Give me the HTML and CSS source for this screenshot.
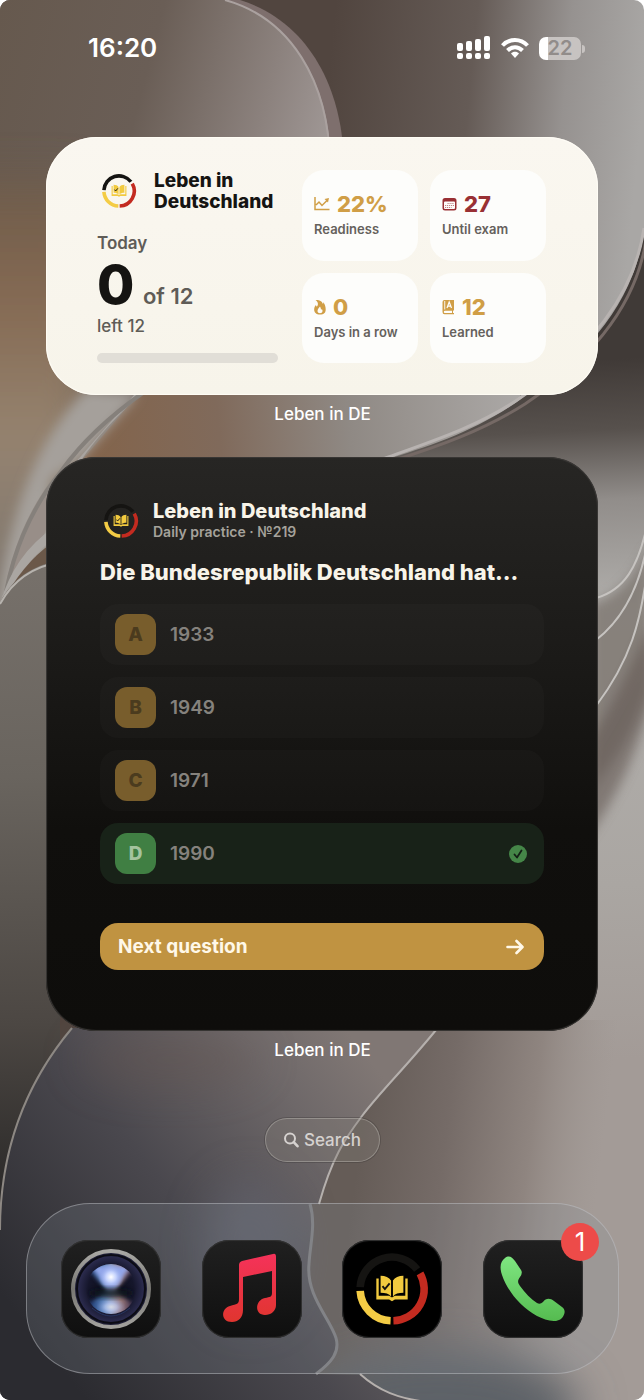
FILE: index.html
```html
<!DOCTYPE html>
<html lang="en">
<head>
  <meta charset="utf-8">
  <meta name="viewport" content="width=device-width, initial-scale=1">
  <title>Leben in DE</title>
  <link rel="stylesheet" href="styles.css">
</head>
<body>
  <!-- shared shapes -->
  <svg class="defs" aria-hidden="true">
    <symbol id="logo" viewBox="0 0 80 80">
      <g fill="none" stroke-width="8">
        <path class="logo-top" d="M6.5 38A33.500 33.500 0 0 1 66.500 19.500"/>
        <path stroke="#c32b20" d="M69.500 23.500A33.500 33.500 0 0 1 41.500 73.500"/>
        <path stroke="#f4cc45" d="M38.500 73.500A33.500 33.500 0 0 1 6.500 42"/>
      </g>
      <g fill="#f2ca3f" class="logo-book">
        <path d="M26 29h-2.500v22H37l3 2 3-2h13.500V29H54v18H43l-3 2-3-2H26z"/>
        <path d="M28 26c5 0 9 2 11 5v17c-2-3-6-4-11-4zM52 26c-5 0-9 2-11 5v17c2-3 6-4 11-4z"/>
      </g>
      <path d="M30 37l2.500 3 5-6" fill="none" stroke="#15130f" stroke-width="2"/>
    </symbol>
  </svg>

  <main class="screen">
    <svg class="wallpaper" viewBox="0 0 644 1400" preserveAspectRatio="none" aria-hidden="true">
      <defs>
        <linearGradient id="base" x1="330" x2="644" y1="60" y2="90" gradientUnits="userSpaceOnUse">
          <stop offset="0" stop-color="#51453f"/>
          <stop offset=".45" stop-color="#655b56"/>
          <stop offset=".75" stop-color="#969290"/>
          <stop offset="1" stop-color="#a9a7a5"/>
        </linearGradient>
        <linearGradient id="lens" x1="0" x2="344" y1="0" y2="90" gradientUnits="userSpaceOnUse">
          <stop offset="0" stop-color="#66594e"/>
          <stop offset=".45" stop-color="#6a5e56"/>
          <stop offset=".8" stop-color="#8c827e"/>
          <stop offset="1" stop-color="#a09896"/>
        </linearGradient>
        <linearGradient id="leftside" x1="0" x2="0" y1="130" y2="620" gradientUnits="userSpaceOnUse">
          <stop offset="0" stop-color="#655648"/>
          <stop offset=".35" stop-color="#856a53"/>
          <stop offset=".62" stop-color="#95836f"/>
          <stop offset="1" stop-color="#7c7671"/>
        </linearGradient>
        <linearGradient id="middle" x1="90" x2="520" y1="440" y2="400" gradientUnits="userSpaceOnUse">
          <stop offset="0" stop-color="#83644b"/>
          <stop offset=".3" stop-color="#806a5b"/>
          <stop offset=".6" stop-color="#8f8984"/>
          <stop offset="1" stop-color="#aba8a6"/>
        </linearGradient>
        <linearGradient id="right" x1="590" x2="625" y1="360" y2="1060" gradientUnits="userSpaceOnUse">
          <stop offset="0" stop-color="#403a37"/>
          <stop offset=".1" stop-color="#57514d"/>
          <stop offset=".2" stop-color="#918d8a"/>
          <stop offset=".36" stop-color="#b2b0ad"/>
          <stop offset=".75" stop-color="#aaa6a2"/>
          <stop offset="1" stop-color="#a39b97"/>
        </linearGradient>
        <linearGradient id="slab" x1="0" x2="10" y1="560" y2="1180" gradientUnits="userSpaceOnUse">
          <stop offset="0" stop-color="#77716b"/>
          <stop offset=".35" stop-color="#69645e"/>
          <stop offset=".75" stop-color="#4c4743"/>
          <stop offset="1" stop-color="#2e2c2b"/>
        </linearGradient>
        <linearGradient id="bowl" x1="30" x2="370" y1="1330" y2="1060" gradientUnits="userSpaceOnUse">
          <stop offset="0" stop-color="#2b2b30"/>
          <stop offset=".45" stop-color="#4a484e"/>
          <stop offset=".8" stop-color="#6e6869"/>
          <stop offset="1" stop-color="#807774"/>
        </linearGradient>
        <linearGradient id="floor" x1="360" x2="600" y1="1140" y2="1170" gradientUnits="userSpaceOnUse">
          <stop offset="0" stop-color="#655c57"/>
          <stop offset=".35" stop-color="#756b67"/>
          <stop offset=".7" stop-color="#8f8580"/>
          <stop offset="1" stop-color="#9d9590" stop-opacity="0"/>
        </linearGradient>
        <filter id="soft" x="-80%" y="-80%" width="260%" height="260%"><feGaussianBlur stdDeviation="22"/></filter>
        <filter id="glow" x="-80%" y="-80%" width="260%" height="260%"><feGaussianBlur stdDeviation="6"/></filter>
      </defs>

      <rect width="644" height="1400" fill="url(#base)"/>
      <path d="M0 0H240C310 22 343 90 344 165V460H0z" fill="#7e6f6d"/>
      <path d="M0 0H225C290 18 330 80 331 165V460H0z" fill="url(#lens)"/>
      <path d="M225 0C290 18 329 80 330 165" fill="none" stroke="#aaa19f" stroke-width="2"/>
      <path d="M-80 180H90V700H-80z" fill="url(#leftside)" filter="url(#soft)"/>

      <path d="M150 380H520V560H50V500L84 458z" fill="url(#middle)"/>
      <path d="M644 232C634 300 590 355 525 396C480 430 430 446 385 460V1400H644z" fill="url(#right)"/>
      <path d="M644 228C634 296 590 350 520 398C480 426 430 442 380 460" fill="none" stroke="#b8b3b1" stroke-width="3"/>
      <path d="M646 240C636 306 592 359 525 404C484 430 440 446 392 461" fill="none" stroke="#756965" stroke-width="3"/>

      <!-- ribbons on the left -->
      <path d="M86 390C36 440 4 520 -6 640L50 580V480L84 456L138 394z" fill="#a5a09b" filter="url(#glow)"/>
      <path d="M144 392C118 414 96 438 80 462L62 478L140 388z" fill="#a9a5a1"/>
      <path d="M50 520V482C30 510 8 550 0 620V640z" fill="#988e88"/>
      <path d="M144 392C110 416 82 442 62 470C28 512 8 560 2 620" fill="none" stroke="#85807b" stroke-width="4"/>
      <path d="M60 528C32 548 12 570 0 620" fill="none" stroke="#aaa6a2" stroke-width="9"/>
      <path d="M60 538C38 550 20 572 8 592L60 566z" fill="#6b5849"/>

      <path d="M0 602C12 580 30 566 60 560V1040L90 1028V1400H0z" fill="url(#slab)"/>
      <path d="M0 604C12 582 30 567 60 562" fill="none" stroke="#b7b3ae" stroke-width="2"/>

      <!-- strands on the right -->
      <path d="M590 604C625 594 640 565 650 545V690C630 740 615 760 590 790z" fill="#7d7670" opacity=".8" filter="url(#glow)"/>
      <path d="M590 740C628 680 640 640 654 620V690C636 760 615 800 580 850z" fill="#645852" opacity=".6" filter="url(#glow)"/>
      <g fill="none" stroke="#c6c3c0" stroke-width="2">
        <path d="M596 598C625 590 638 565 646 530"/>
        <path d="M596 640C628 615 640 580 646 550"/>
        <path d="M596 706C632 658 640 620 646 580"/>
      </g>

      <path d="M300 1020H644V1400H300z" fill="url(#floor)"/>
      <ellipse cx="440" cy="1410" rx="140" ry="60" fill="#5d6267" filter="url(#soft)"/>
      <path d="M72 1028C20 1090 0 1160 0 1240V1400H420C400 1398 380 1392 362 1375L316 1374C332 1362 340 1352 336 1338C330 1318 306 1296 309 1264C310 1245 316 1224 310 1204H319C332 1158 344 1140 362 1116C380 1092 405 1068 436 1030z" fill="url(#bowl)"/>
      <ellipse cx="170" cy="1060" rx="90" ry="26" fill="#65544f" opacity=".4" filter="url(#soft)"/>
      <ellipse cx="250" cy="1250" rx="46" ry="70" fill="#646571" opacity=".6" filter="url(#soft)"/>
      <path d="M72 1028C20 1090 0 1160 0 1230" fill="none" stroke="#8d8883" stroke-width="2"/>
      <path d="M436 1030C405 1068 380 1092 362 1116C344 1140 332 1158 319 1204M360 1374C380 1392 400 1398 420 1401" fill="none" stroke="#b5b0ad" stroke-width="2"/>
      <path d="M310 1204C316 1224 310 1245 309 1264C306 1296 330 1318 336 1338C340 1352 332 1362 316 1374" fill="none" stroke="#828183" stroke-width="3"/>
    </svg>

    <header class="status">
      <time>16:20</time>
      <div class="status-icons">
        <svg width="34" height="24" viewBox="0 0 34 24" fill="#fff" aria-label="Signal">
          <rect x="0" y="7" width="6" height="8" rx="2"/><rect x="9" y="5" width="6" height="10" rx="2"/>
          <rect x="18" y="3" width="6" height="12" rx="2"/><rect x="27" y="0" width="6" height="15" rx="2"/>
          <rect x="0" y="17" width="6" height="6" rx="2"/><rect x="9" y="17" width="6" height="6" rx="2"/>
          <rect x="18" y="17" width="6" height="6" rx="2"/><rect x="27" y="17" width="6" height="6" rx="2"/>
        </svg>
        <svg width="28" height="22" viewBox="0 0 28 22" fill="none" stroke="#fff" stroke-width="4" aria-label="Wi-Fi">
          <path d="M1.500 8.500C8.500 1 19.500 1 26.500 8.500"/>
          <path d="M6.500 13.500C11 9 17 9 21.500 13.500"/>
          <path d="M14 21l-4-4.500c2-2.500 6-2.500 8 0z" fill="#fff" stroke="none"/>
        </svg>
        <span class="battery">22</span>
      </div>
    </header>

    <section class="widget stats">
      <div class="today">
        <div class="brand">
          <svg class="logo" aria-hidden="true"><use href="#logo"/></svg>
          <h2>Leben in Deutschland</h2>
        </div>
        <p class="today-label">Today</p>
        <p class="count"><strong>0</strong> of 12</p>
        <p class="left">left 12</p>
        <div class="bar"></div>
      </div>
      <div class="tiles">
        <div class="tile">
          <p class="value">
            <svg width="16" height="16" viewBox="0 0 16 16" fill="none" stroke="currentColor" stroke-width="1.500"><path d="M1 1v12.500h14.500M2 9l3-3 3 3.500 5-5"/><path d="M10.500 3l4.500-1-1 4.500z" fill="currentColor" stroke="none"/></svg>
            22%
          </p>
          <p class="caption">Readiness</p>
        </div>
        <div class="tile">
          <p class="value exam">
            <svg width="15" height="16" viewBox="0 0 15 16"><path fill="currentColor" fill-rule="evenodd" d="M3 2h9q2.500 0 2.500 2.500v7.500q0 2.500-2.500 2.500H3Q.5 14.500.5 12V4.500Q.5 2 3 2zM3 5.500q-1 0-1 1V12q0 1 1 1h9q1 0 1-1V6.500q0-1-1-1z"/><path d="M5.500 7.500H12M3 9.500h9M3 11.500h6.500" stroke="currentColor" stroke-opacity=".6" stroke-width="1.200" stroke-dasharray="1.200 .8"/></svg>
            27
          </p>
          <p class="caption">Until exam</p>
        </div>
        <div class="tile">
          <p class="value">
            <svg width="12" height="16" viewBox="0 0 12 16"><path fill="currentColor" fill-rule="evenodd" d="M1.500 1C7 1 8 3 9 5c.3-.7.3-1.200 0-2 3 3 3.500 9 1.500 11-2 2-7 2-9 0C-1 11 .5 7.500 2 6c.2 1 .5 1.500 1 1.500C5 5 3.500 2.500 1.500 1zM6 7.500c-1 1.500-2.500 2.500-2.500 4.500 0 3 5 3 5 0 0-1-.3-1.500-.8-2l-.7 1C7 9.500 6.500 8.500 6 7.500z"/></svg>
            0
          </p>
          <p class="caption">Days in a row</p>
        </div>
        <div class="tile">
          <p class="value">
            <svg width="13" height="16" viewBox="0 0 13 16"><path fill="currentColor" fill-rule="evenodd" d="M2.500 1H12v10.500h-1V14h1v1.200H2.500Q.5 15.200.5 13V3Q.5 1 2.500 1zM3 11.700q-1.200 0-1.200 1.200T3 14h7v-2.300zM2.300 2v8.500h.9V2z"/><path d="M5 9l2.200-6L9.500 9M5.700 7.200h3" fill="none" stroke="#fdfdfb" stroke-width="1.200"/></svg>
            12
          </p>
          <p class="caption">Learned</p>
        </div>
      </div>
    </section>
    <p class="widget-name">Leben in DE</p>

    <section class="widget quiz">
      <div class="brand">
        <svg class="logo" aria-hidden="true"><use href="#logo"/></svg>
        <div>
          <h2>Leben in Deutschland</h2>
          <p class="sub">Daily practice · №219</p>
        </div>
      </div>
      <h3>Die Bundesrepublik Deutschland hat...</h3>
      <div class="options">
        <button class="option"><span class="letter">A</span>1933</button>
        <button class="option"><span class="letter">B</span>1949</button>
        <button class="option"><span class="letter">C</span>1971</button>
        <button class="option correct"><span class="letter">D</span>1990
          <svg width="18" height="18" viewBox="0 0 18 18"><circle cx="9" cy="9" r="9" fill="#458648"/><path d="M5.500 9.500l2.500 3 4.500-7" fill="none" stroke="#142016" stroke-width="1.800" stroke-linecap="round" stroke-linejoin="round"/></svg>
        </button>
      </div>
      <button class="next">Next question
        <svg width="18" height="16" viewBox="0 0 18 16" fill="none" stroke="currentColor" stroke-width="2.600" stroke-linecap="round" stroke-linejoin="round"><path d="M1.500 8H16M10.500 2L16.500 8l-6 6"/></svg>
      </button>
    </section>
    <p class="widget-name">Leben in DE</p>

    <button class="search">
      <svg width="15" height="16" viewBox="0 0 15 16" fill="none" stroke="currentColor" stroke-width="2" stroke-linecap="round"><circle cx="6" cy="6.500" r="5"/><path d="M9.700 10.200L13.500 14.200" stroke-width="2.600"/></svg>
      Search
    </button>

    <nav class="dock">
      <a class="app" href="#camera" aria-label="Camera">
        <svg viewBox="0 0 100 98">
          <defs>
            <radialGradient id="glass"><stop offset="0" stop-color="#0a0c16"/><stop offset=".6" stop-color="#15162b"/><stop offset=".85" stop-color="#2a2a4c"/><stop offset="1" stop-color="#151525"/></radialGradient>
            <linearGradient id="ring" x1="0" x2="0" y1="0" y2="1"><stop offset="0" stop-color="#aaa9a5"/><stop offset=".5" stop-color="#777672"/><stop offset="1" stop-color="#a3a29e"/></linearGradient>
            <radialGradient id="shine"><stop offset="0" stop-color="#fff"/><stop offset=".4" stop-color="#c3d1fd"/><stop offset="1" stop-color="#7f95e0" stop-opacity="0"/></radialGradient>
            <linearGradient id="shine2" x1="0" x2="1" y1="0" y2="0"><stop offset="0" stop-color="#1c3f86"/><stop offset=".35" stop-color="#6fa3e0"/><stop offset=".5" stop-color="#c3d4ef"/><stop offset=".7" stop-color="#c79c94"/><stop offset="1" stop-color="#4a3658"/></linearGradient>
            <filter id="haze" x="-30%" y="-30%" width="160%" height="160%"><feGaussianBlur stdDeviation="2"/></filter>
            <clipPath id="ball"><circle cx="50" cy="49" r="25"/></clipPath>
          </defs>
          <circle cx="50" cy="49" r="38" fill="url(#glass)" stroke="url(#ring)" stroke-width="4"/>
          <circle cx="50" cy="49" r="34" fill="none" stroke="#0c0c15" stroke-width="2"/>
          <g clip-path="url(#ball)">
            <path d="M28 30Q50 14 72 30L54 50L72 64Q66 78 50 78T28 64L46 50z" fill="url(#shine2)" opacity=".8" filter="url(#haze)"/>
            <path d="M30 26H70L52 50H48z" fill="#94a8ec" filter="url(#haze)"/>
            <circle cx="50" cy="37" r="13" fill="url(#shine)"/>
            <ellipse cx="50" cy="67" rx="15" ry="9" fill="url(#shine)" opacity=".6"/>
            <ellipse cx="50" cy="53" rx="22" ry="5" fill="#10121d" opacity=".8" filter="url(#haze)"/>
          </g>
          <path d="M31 68Q50 84 69 68" fill="none" stroke="#27345f"/>
        </svg>
      </a>
      <a class="app" href="#music" aria-label="Music">
        <svg viewBox="0 0 100 98">
          <defs><linearGradient id="note" x1="0" x2="0" y1="0" y2="1"><stop offset="0" stop-color="#f5325a"/><stop offset="1" stop-color="#e0352f"/></linearGradient></defs>
          <path fill="url(#note)" d="M40 21L71 14Q74 13 74 17V65C74 71 69 75 63 75C52 75 53 60 63 58C68 57 70 57 70 53V31L41 37V70C41 78 36 82 30 82C18 82 19 68 28 66C35 64 37 64 37 59V25Q37 22 40 21z"/>
        </svg>
      </a>
      <a class="app app-leben" href="#leben" aria-label="Leben in DE">
        <svg viewBox="0 0 100 98"><use href="#logo" x="12" y="11" width="76" height="76"/></svg>
      </a>
      <a class="app" href="#phone" aria-label="Phone">
        <svg viewBox="0 0 100 98">
          <defs><linearGradient id="call" x1="0" x2="0" y1="0" y2="1"><stop offset="0" stop-color="#7fe681"/><stop offset="1" stop-color="#55bb50"/></linearGradient></defs>
          <path fill="url(#call)" d="M22 18C26 15 29 17 32 21L38 30Q40 33 37 37C34 41 35 43 37 46C42 53 48 59 54 63Q57 65 60 62C63 58 67 58 71 61L79 67C83 70 82 74 79 78C73 84 62 80 54 76C37 67 24 50 19 35C16 26 18 21 22 18z"/>
        </svg>
        <span class="badge">1</span>
      </a>
    </nav>
  </main>
</body>
</html>
```
FILE: styles.css
```css
* {
  box-sizing: border-box;
}

body {
  margin: 0;
  background-color: #fff;
  font-family: Inter, "Liberation Sans", sans-serif;
}

h2, h3, p {
  margin: 0;
}

button {
  font-family: inherit;
  border: none;
  cursor: pointer;
}

.defs {
  position: absolute;
  width: 0;
  height: 0;
}

.screen {
  position: relative;
  z-index: 0;
  display: flex;
  flex-direction: column;
  min-height: 100vh;
  padding: 0 25px 26px 26px;
  border-radius: 10px;
  overflow: hidden;
}

.wallpaper {
  position: absolute;
  inset: 0;
  z-index: -1;
  width: 100%;
  height: 100%;
}

/* status bar */
.status {
  display: flex;
  justify-content: space-between;
  align-items: center;
  padding: 32px 38px 73px 62px;
  color: #fff;
}

.status time {
  font-size: 26px;
  line-height: 32px;
  font-weight: 600;
}

.status-icons {
  display: flex;
  align-items: center;
  gap: 10px;
}

.battery {
  position: relative;
  width: 42px;
  height: 23px;
  border-radius: 7px;
  background: linear-gradient(90deg, #fff 22%, #c7c3c1 22%);
  color: #918c8a;
  font-size: 20px;
  line-height: 23px;
  font-weight: 600;
  text-align: center;
}

.battery::after {
  content: "";
  position: absolute;
  right: -4px;
  top: 8px;
  width: 3px;
  height: 8px;
  border-radius: 0 3px 3px 0;
  background-color: #c7c3c1;
}

/* widgets */
.widget {
  margin: 0 21px 0 20px;
  border-radius: 50px;
}

.brand {
  display: flex;
  align-items: center;
}

.logo {
  width: 36px;
  height: 36px;
  flex: none;
}

.logo-top {
  stroke: #151412;
}

.stats {
  display: flex;
  gap: 24px;
  padding: 33px 52px 32px 51px;
  background: linear-gradient(#faf7f0, #f7f4ea);
  box-shadow: inset 0 0 1px 1px #fffdf6;
  color: #151412;
}

.today {
  flex: 181;
}

.stats .brand {
  gap: 17px;
  padding-left: 4px;
}

.stats .logo-book {
  stroke: #2a2515;
}

.stats h2 {
  font-size: 19px;
  line-height: 21px;
  font-weight: 800;
}

.today-label {
  margin-top: 20px;
  color: #5f5c57;
  font-size: 17px;
  line-height: 22px;
  font-weight: 600;
}

.count {
  color: #5f5c57;
  font-size: 22px;
  line-height: 26px;
  font-weight: 600;
}

.count strong {
  margin-right: 3px;
  color: #151412;
  font-size: 54px;
  line-height: 61px;
  font-weight: 800;
}

.left {
  color: #5f5c57;
  font-size: 17px;
  line-height: 22px;
  font-weight: 500;
}

.bar {
  height: 10px;
  margin-top: 16px;
  border-radius: 5px;
  background-color: #e1ded7;
}

.tiles {
  flex: 244;
  display: grid;
  grid-template-columns: 1fr 1fr;
  gap: 12px;
}

.tile {
  display: flex;
  flex-direction: column;
  justify-content: center;
  padding: 0 12px;
  border-radius: 22px;
  background-color: #fdfdfb;
}

.value {
  display: flex;
  align-items: center;
  gap: 7px;
  color: #d09e46;
  font-size: 22px;
  line-height: 28px;
  font-weight: 800;
}

.exam {
  color: #993034;
}

.caption {
  color: #65615c;
  font-size: 13px;
  line-height: 22px;
  font-weight: 600;
  white-space: nowrap;
}

.widget-name {
  color: #fff;
  font-size: 17px;
  line-height: 22px;
  font-weight: 500;
  text-align: center;
  padding: 8px 0 32px;
}

/* daily question */
.quiz {
  padding: 43px 54px 61px;
  background: linear-gradient(#272624, #1b1a18 35%, #100f0d 65%, #0e0d0b);
  box-shadow: inset 0 0 1px 1px #3b3937;
  color: #f8f4e9;
}

.quiz .brand {
  gap: 14px;
  padding-left: 3px;
}

.quiz h2 {
  font-size: 20px;
  line-height: 23px;
  font-weight: 800;
}

.sub {
  color: #a5a29b;
  font-size: 14px;
  line-height: 18px;
  font-weight: 600;
}

.quiz h3 {
  margin: 17px 0;
  font-size: 22px;
  line-height: 29px;
  font-weight: 800;
  white-space: nowrap;
}

.options {
  display: flex;
  flex-direction: column;
  gap: 12px;
}

.option {
  display: flex;
  align-items: center;
  gap: 14px;
  padding: 10px 17px 10px 15px;
  border-radius: 18px;
  background-color: rgba(255, 255, 255, 0.02);
  color: #85827d;
  font-size: 19px;
  line-height: 22px;
  font-weight: 600;
}

.letter {
  width: 41px;
  border-radius: 12px;
  background-color: #785d2c;
  color: #4b3b1e;
  line-height: 41px;
  font-weight: 800;
}

.correct {
  background-color: #182218;
}

.correct .letter {
  background-color: #407f43;
  color: #a5c39e;
}

.correct svg {
  margin-left: auto;
}

.next {
  display: flex;
  justify-content: space-between;
  align-items: center;
  width: 100%;
  margin-top: 39px;
  padding: 12px 20px 12px 18px;
  border-radius: 18px;
  background-color: #c09341;
  color: #fff8e8;
  font-size: 19px;
  line-height: 23px;
  font-weight: 700;
}

/* search and dock */
.search {
  display: flex;
  align-items: center;
  gap: 5px;
  align-self: center;
  margin: 25px 0 41px;
  padding: 10px 18px;
  border: 1px solid rgba(210, 205, 200, 0.35);
  border-radius: 22px;
  background-color: rgba(130, 122, 118, 0.35);
  box-shadow: 0 0 0 1px rgba(50, 45, 45, 0.3);
  color: #d5d1cf;
  font-size: 17px;
  line-height: 22px;
  font-weight: 500;
}

.dock {
  display: flex;
  justify-content: space-between;
  margin-top: auto;
  padding: 36px 35px 35px 34px;
  border: 1px solid rgba(200, 200, 205, 0.45);
  border-radius: 64px;
  background-color: rgba(130, 140, 148, 0.22);
}

.app {
  position: relative;
  width: 100px;
  height: 98px;
  border-radius: 27px;
  background: linear-gradient(#202020, #0f0f0f);
  box-shadow: inset 0 0 1px 1px #343434;
}

.app svg {
  display: block;
  width: 100%;
  height: 100%;
}

.app-leben {
  background: #000;
}

.app-leben .logo-top {
  stroke: #242223;
}

.badge {
  position: absolute;
  top: -17px;
  right: -16px;
  width: 38px;
  border-radius: 19px;
  background-color: #ed4b49;
  color: #fff;
  font-size: 26px;
  line-height: 38px;
  text-align: center;
}
```
